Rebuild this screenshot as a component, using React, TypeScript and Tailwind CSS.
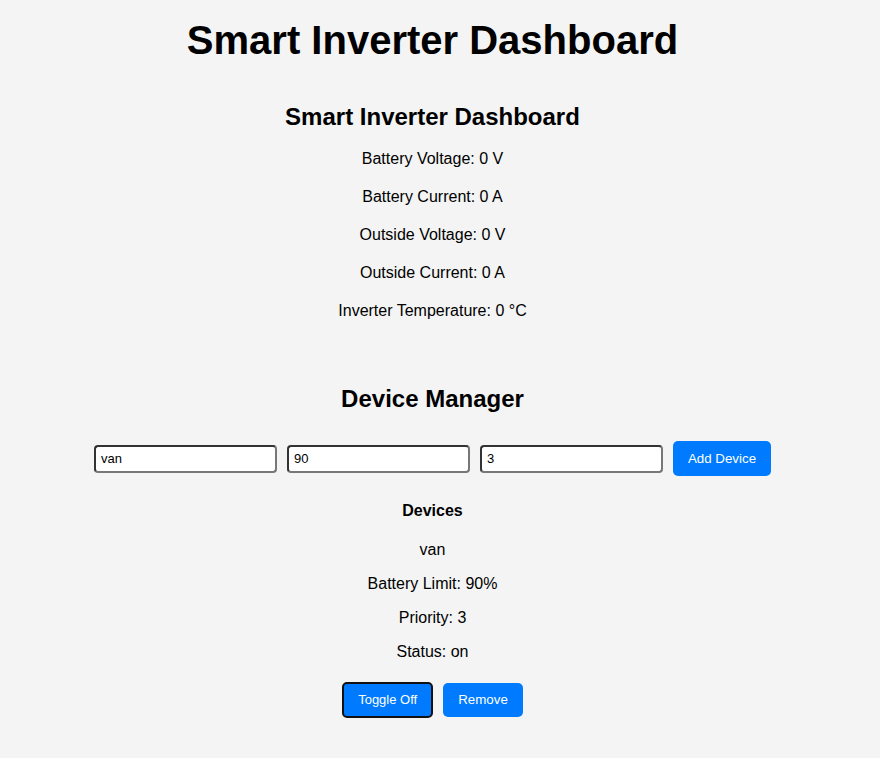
const font = { fontFamily: '"Liberation Sans", Arial, sans-serif' };

const stats = [
  'Battery Voltage: 0 V',
  'Battery Current: 0 A',
  'Outside Voltage: 0 V',
  'Outside Current: 0 A',
  'Inverter Temperature: 0 °C',
];

export default function App() {
  return (
    <div className="min-h-[758px] bg-[#f4f4f4] text-black" style={font}>
      <div className="w-[865px] flex flex-col items-center text-center">
        <h1 className="mt-[17px] h-[46px] leading-[46px] text-[40px] font-bold">Smart Inverter Dashboard</h1>

        <h2 className="mt-[40px] h-[28px] leading-[28px] text-[24px] font-bold">Smart Inverter Dashboard</h2>
        <div className="mt-[19px] flex flex-col gap-[20px]">
          {stats.map((s) => (
            <p key={s} className="h-[18px] leading-[18px] text-[16px]">{s}</p>
          ))}
        </div>

        <h2 className="mt-[65px] h-[28px] leading-[28px] text-[24px] font-bold">Device Manager</h2>
        <div className="mt-[28px] flex items-center gap-[10px]">
          {['van', '90', '3'].map((v) => (
            <input
              key={v}
              defaultValue={v}
              className="w-[183px] h-[28px] px-[5px] text-[13px] bg-white rounded-[4px] border-2 border-t-[#333] border-l-[#333] border-b-[#777] border-r-[#777] outline-none"
              style={font}
            />
          ))}
          <button className="h-[35px] px-[15px] rounded-[5px] bg-[#007bff] text-white text-[13.33px]" style={font}>
            Add Device
          </button>
        </div>

        <h4 className="mt-[26px] h-[18px] leading-[18px] text-[16px] font-bold">Devices</h4>
        <div className="mt-[21px] flex flex-col gap-[16px]">
          <p className="h-[18px] leading-[18px] text-[16px]">van</p>
          <p className="h-[18px] leading-[18px] text-[16px]">Battery Limit: 90%</p>
          <p className="h-[18px] leading-[18px] text-[16px]">Priority: 3</p>
          <p className="h-[18px] leading-[18px] text-[16px]">Status: on</p>
        </div>
        <div className="mt-[21px] flex items-center gap-[10px]">
          <button className="h-[36px] px-[14px] rounded-[5px] border-2 border-[#111] bg-[#007bff] text-white text-[13px]" style={font}>
            Toggle Off
          </button>
          <button className="h-[34px] px-[15px] rounded-[5px] bg-[#007bff] text-white text-[13.33px]" style={font}>
            Remove
          </button>
        </div>
      </div>
    </div>
  );
}
